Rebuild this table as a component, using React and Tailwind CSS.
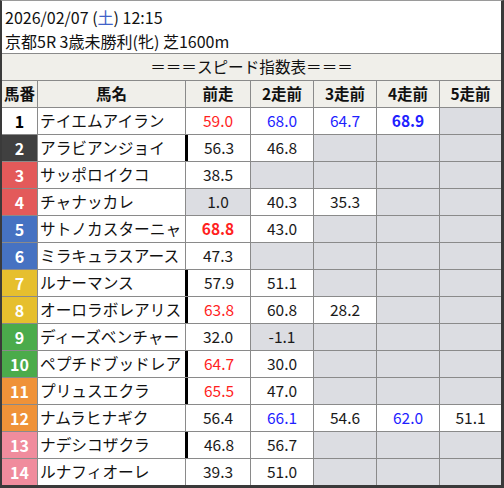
import React from "react";

const WAKU = {
  1: "bg-white text-black",
  2: "bg-[#404040] text-white",
  3: "bg-[#e35a5a] text-white",
  4: "bg-[#e35a5a] text-white",
  5: "bg-[#4672c2] text-white",
  6: "bg-[#4672c2] text-white",
  7: "bg-[#e6bf2e] text-white",
  8: "bg-[#e6bf2e] text-white",
  9: "bg-[#4bab4b] text-white",
  10: "bg-[#4bab4b] text-white",
  11: "bg-[#ef9239] text-white",
  12: "bg-[#ef9239] text-white",
  13: "bg-[#f08c9d] text-white",
  14: "bg-[#f08c9d] text-white",
};

// value, style: k=black r=red b=blue, R/B bold, g = gray background
const HORSES = [
  { no: 1, name: "テイエムアイラン", bar: false, v: [["59.0", "r"], ["68.0", "b"], ["64.7", "b"], ["68.9", "B"], null] },
  { no: 2, name: "アラビアンジョイ", bar: true, v: [["56.3", "k"], ["46.8", "k"], null, null, null] },
  { no: 3, name: "サッポロイクコ", bar: false, v: [["38.5", "k"], null, null, null, null] },
  { no: 4, name: "チャナッカレ", bar: false, v: [["1.0", "k", true], ["40.3", "k"], ["35.3", "k"], null, null] },
  { no: 5, name: "サトノカスターニャ", bar: false, v: [["68.8", "R"], ["43.0", "k"], null, null, null] },
  { no: 6, name: "ミラキュラスアース", bar: false, v: [["47.3", "k"], null, null, null, null] },
  { no: 7, name: "ルナーマンス", bar: true, v: [["57.9", "k"], ["51.1", "k"], null, null, null] },
  { no: 8, name: "オーロラボレアリス", bar: true, v: [["63.8", "r"], ["60.8", "k"], ["28.2", "k"], null, null] },
  { no: 9, name: "ディーズベンチャー", bar: false, v: [["32.0", "k"], ["-1.1", "k", true], null, null, null] },
  { no: 10, name: "ペプチドブッドレア", bar: true, v: [["64.7", "r"], ["30.0", "k"], null, null, null] },
  { no: 11, name: "プリュスエクラ", bar: true, v: [["65.5", "r"], ["47.0", "k"], null, null, null] },
  { no: 12, name: "ナムラヒナギク", bar: false, v: [["56.4", "k"], ["66.1", "b"], ["54.6", "k"], ["62.0", "b"], ["51.1", "k"]] },
  { no: 13, name: "ナデシコザクラ", bar: true, v: [["46.8", "k"], ["56.7", "k"], null, null, null] },
  { no: 14, name: "ルナフィオーレ", bar: false, v: [["39.3", "k"], ["51.0", "k"], null, null, null] },
];

const TONE = {
  k: "text-[#1a1a1a]",
  r: "text-[#ff1f1f]",
  R: "text-[#ff1f1f] font-bold",
  b: "text-[#1f1fff]",
  B: "text-[#1f1fff] font-bold",
};

const HEADS = ["馬番", "馬名", "前走", "2走前", "3走前", "4走前", "5走前"];

const ValueCell = ({ cell, bar }) => {
  const barCls = bar ? "border-l-[2px] border-black shadow-[-1px_0_0_#000]" : "";
  if (!cell) {
    return <div className={`bg-[#dcdde2] ${barCls}`} />;
  }
  const [val, tone, gray] = cell;
  return (
    <div
      className={`flex items-center justify-center text-[15.5px] ${gray ? "bg-[#dcdde2]" : "bg-white"} ${TONE[tone]} ${barCls}`}
    >
      {val}
    </div>
  );
};

const App = () => {
  return (
    <div className="w-[504px] h-[488px] bg-white border-solid border-t border-l-2 border-r-[3px] border-b-[3px] border-[#3a3a3a] border-t-[#9a9a9a] font-['Noto_Sans_CJK_JP','Noto_Sans',sans-serif] text-[#111]">
      {/* title */}
      <div className="h-[52px] pt-[4px] pl-[3px] text-[16px] leading-[24px]">
        <div>
          2026/02/07 (<span className="text-[#4062c8]">土</span>) 12:15
        </div>
        <div>京都5R 3歳未勝利(牝) 芝1600m</div>
      </div>

      {/* table */}
      <div className="border-t border-[#8a8a8a] grid grid-cols-[35px_147px_64px_62px_62px_62px_61px] grid-rows-[repeat(16,26px)] gap-px bg-[#8a8a8a]">
        <div className="col-span-7 bg-[#f0efea] flex items-center justify-center text-[15.6px]">
          ＝＝＝スピード指数表＝＝＝
        </div>
        {HEADS.map((h) => (
          <div
            key={h}
            className="bg-[#f0efea] flex items-center justify-center font-bold text-[15.5px]"
          >
            {h}
          </div>
        ))}
        {HORSES.map((horse) => (
          <React.Fragment key={horse.no}>
            <div
              className={`flex items-center justify-center font-bold text-[16px] ${WAKU[horse.no]}`}
            >
              {horse.no}
            </div>
            <div className="bg-white flex items-center pl-[2px] text-[15.7px] whitespace-nowrap overflow-hidden">
              {horse.name}
            </div>
            {horse.v.map((c, i) => (
              <ValueCell key={i} cell={c} bar={i === 0 && horse.bar} />
            ))}
          </React.Fragment>
        ))}
      </div>
    </div>
  );
};

export default App;
